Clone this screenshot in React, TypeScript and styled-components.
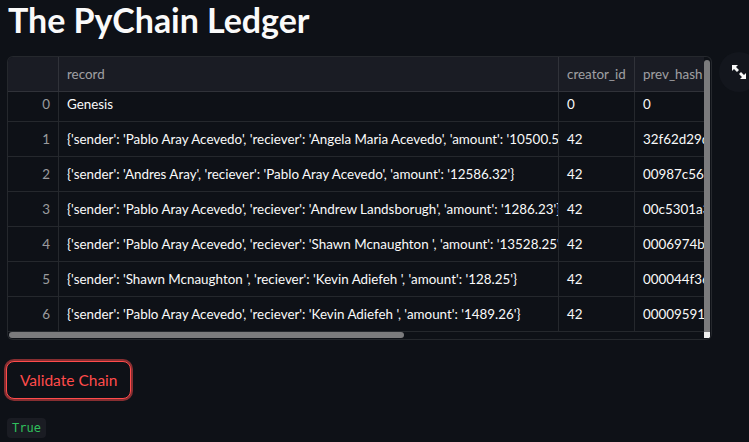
import React from "react";
import styled, { createGlobalStyle } from "styled-components";

const Global = createGlobalStyle`
  html, body { margin: 0; padding: 0; background: #0e1117; }
  body { font-family: Lato, "Noto Sans", sans-serif; color: #fafafa; }
  * { box-sizing: border-box; }
`;

const Page = styled.main`
  width: 749px;
  height: 442px;
  overflow: hidden;
  padding: 0 0 0 7px;
  display: flex;
  flex-direction: column;
`;

const Title = styled.h1`
  margin: 0;
  padding: 0 0 0 1px;
  font-family: Lato, "Noto Sans", sans-serif;
  font-weight: 700;
  font-size: 34px;
  line-height: 40px;
  color: #fafafa;
  letter-spacing: -0.05px;
`;

const TableRow = styled.div`
  display: flex;
  align-items: flex-start;
  margin-top: 16px;
`;

const Frame = styled.div`
  position: relative;
  flex: 0 0 705px;
  width: 705px;
  height: 284px;
  border: 1px solid rgba(250, 250, 250, 0.1);
  border-radius: 6px;
  overflow: hidden;
  background: #0e1117;
`;

const Viewport = styled.div`
  width: 696px;
  overflow: hidden;
`;

const Row = styled.div<{ $head?: boolean }>`
  display: flex;
  width: 760px;
  height: 35px;
  background: ${(p) => (p.$head ? "#1a1c24" : "#0e1117")};
  border-bottom: 1px solid rgba(250, 250, 250, 0.1);
  color: ${(p) => (p.$head ? "rgba(250,250,250,0.6)" : "#fafafa")};
`;

const Body = styled.div`
  height: 240px;
  overflow: hidden;
`;

const BodyInner = styled.div`
  margin-top: -5px;
`;

const Cell = styled.div<{ $w: number; $right?: boolean; $muted?: boolean }>`
  flex: 0 0 ${(p) => p.$w}px;
  width: ${(p) => p.$w}px;
  padding: 0 8px;
  display: flex;
  align-items: center;
  justify-content: ${(p) => (p.$right ? "flex-end" : "flex-start")};
  border-right: 1px solid rgba(250, 250, 250, 0.1);
  font-size: 13.4px;
  white-space: nowrap;
  overflow: hidden;
  color: ${(p) => (p.$muted ? "rgba(250,250,250,0.6)" : "inherit")};
`;

const VThumb = styled.div`
  position: absolute;
  right: 1px;
  top: 3px;
  width: 6px;
  height: 274px;
  border-radius: 3px;
  background: #7b7b7d;
`;

const HThumb = styled.div`
  position: absolute;
  left: 1px;
  bottom: 1px;
  width: 395px;
  height: 6px;
  border-radius: 3px;
  background: #7b7b7d;
`;

const Corner = styled.div`
  position: absolute;
  right: 1px;
  bottom: 1px;
  width: 6px;
  height: 6px;
  background: #f0f0f0;
`;

const ExpandBtn = styled.button`
  flex: 0 0 40px;
  margin: -4px 0 0 7px;
  width: 40px;
  height: 40px;
  border-radius: 50%;
  border: none;
  background: #13161d;
  display: flex;
  align-items: center;
  justify-content: center;
  padding: 0;
  color: #fafafa;
`;

const Button = styled.button`
  align-self: flex-start;
  margin-top: 21px;
  margin-left: -1px;
  height: 38px;
  padding: 0 13px;
  border-radius: 8px;
  border: 1px solid #ff4b4b;
  box-shadow: 0 0 0 2px rgba(255, 75, 75, 0.5);
  background: #0e1117;
  color: #ff4b4b;
  font-family: Lato, "Noto Sans", sans-serif;
  font-size: 15.5px;
`;

const Code = styled.code`
  align-self: flex-start;
  margin-top: 19px;
  margin-left: 0px;
  padding: 2px 5px;
  border-radius: 4px;
  background: #1a1c23;
  color: #2fbf5c;
  font-family: "DejaVu Sans Mono", "Liberation Mono", monospace;
  font-size: 12px;
  line-height: 16px;
`;

const records = [
  "Genesis",
  "{'sender': 'Pablo Aray Acevedo', 'reciever': 'Angela Maria Acevedo', 'amount': '10500.50'}",
  "{'sender': 'Andres Aray', 'reciever': 'Pablo Aray Acevedo', 'amount': '12586.32'}",
  "{'sender': 'Pablo Aray Acevedo', 'reciever': 'Andrew Landsborugh', 'amount': '1286.23'}",
  "{'sender': 'Pablo Aray Acevedo', 'reciever': 'Shawn Mcnaughton ', 'amount': '13528.25'}",
  "{'sender': 'Shawn Mcnaughton ', 'reciever': 'Kevin Adiefeh ', 'amount': '128.25'}",
  "{'sender': 'Pablo Aray Acevedo', 'reciever': 'Kevin Adiefeh ', 'amount': '1489.26'}",
];
const creators = ["0", "42", "42", "42", "42", "42", "42"];
const hashes = ["0", "32f62d29d1a8", "00987c56d1a8", "00c5301a3e2f", "0006974bf4a1", "000044f365a2", "000095913e7b"];

const widths = [51, 500, 76, 133];

function ExpandIcon() {
  return (
    <svg width="16" height="16" viewBox="0 0 16 16" fill="#fafafa">
      <path d="M1 1h6L5 3l3 3-2 2-3-3-2 2z" />
      <path d="M15 15H9l2-2-3-3 2-2 3 3 2-2z" />
    </svg>
  );
}

export default function App() {
  return (
    <>
      <Global />
      <Page>
        <Title>The PyChain Ledger</Title>
        <TableRow>
          <Frame>
            <Viewport>
              <Row $head>
                <Cell $w={widths[0]} />
                <Cell $w={widths[1]}>record</Cell>
                <Cell $w={widths[2]}>creator_id</Cell>
                <Cell $w={widths[3]}>prev_hash</Cell>
              </Row>
              <Body>
                <BodyInner>
                  {records.map((r, i) => (
                    <Row key={i}>
                      <Cell $w={widths[0]} $right $muted>
                        {i}
                      </Cell>
                      <Cell $w={widths[1]}>{r}</Cell>
                      <Cell $w={widths[2]}>{creators[i]}</Cell>
                      <Cell $w={widths[3]}>{hashes[i]}</Cell>
                    </Row>
                  ))}
                </BodyInner>
              </Body>
            </Viewport>
            <VThumb />
            <HThumb />
            <Corner />
          </Frame>
          <ExpandBtn aria-label="expand">
            <ExpandIcon />
          </ExpandBtn>
        </TableRow>
        <Button>Validate Chain</Button>
        <Code>True</Code>
      </Page>
    </>
  );
}
